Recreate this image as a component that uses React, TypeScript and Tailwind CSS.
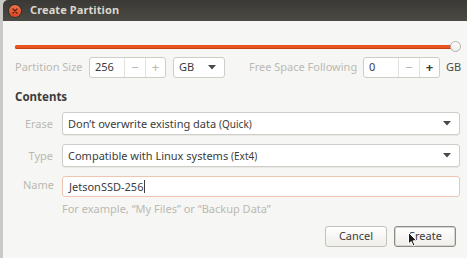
import React from 'react';

const font = { fontFamily: '"Noto Sans", "DejaVu Sans", sans-serif' };

function Arrow() {
  return (
    <svg width="8" height="5" viewBox="0 0 8 5" className="shrink-0">
      <path d="M0 0 L8 0 L4 4.5 Z" fill="#4a4a48" />
    </svg>
  );
}

function SpinBox({ value, minusOn, plusOn }: { value: string; minusOn: boolean; plusOn: boolean }) {
  return (
    <div className="flex h-[21px] w-[77px] shrink-0 rounded-[3px] border border-[#cfcdc8] bg-white text-[11px] text-[#3c3c3c]">
      <div className="flex w-[34px] items-center pl-[5px]">{value}</div>
      <div className={`flex w-[21px] items-center justify-center border-l border-[#e4e2de] text-[13px] ${minusOn ? 'text-[#3c3c3c]' : 'text-[#b9b7b1]'}`}>−</div>
      <div className={`flex flex-1 items-center justify-center border-l border-[#e4e2de] text-[13px] ${plusOn ? 'text-[#3c3c3c] font-bold' : 'text-[#b9b7b1]'}`}>+</div>
    </div>
  );
}

function Combo({ children }: { children: React.ReactNode }) {
  return (
    <div className="flex h-[23px] flex-1 items-center justify-between rounded-[3px] border border-[#cfcdc8] bg-white pl-[5px] pr-[8px] text-[11px] text-[#3c3c3c] shadow-[0_1px_0_rgba(0,0,0,0.05)]">
      <span className="whitespace-nowrap">{children}</span>
      <Arrow />
    </div>
  );
}

export default function App() {
  return (
    <div className="relative h-[258px] w-[467px] overflow-hidden bg-[#c9c9c7] pl-[3px]" style={font}>
      <div className="flex h-full flex-col rounded-tl-[5px] bg-[#f6f6f4]">
        {/* title bar */}
        <div className="flex h-[21px] shrink-0 items-center gap-[9px] rounded-tl-[5px] bg-gradient-to-b from-[#3a3935] to-[#4b4a44] pl-[6px]">
          <div className="flex h-[12px] w-[12px] items-center justify-center rounded-full bg-gradient-to-b from-[#f0724a] to-[#d9431d] shadow-[0_0_0_1px_rgba(0,0,0,0.25)]">
            <svg width="6" height="6" viewBox="0 0 6 6">
              <path d="M1 1 L5 5 M5 1 L1 5" stroke="#5a1e0c" strokeWidth="1.3" strokeLinecap="round" />
            </svg>
          </div>
          <span className="whitespace-nowrap text-[11px] font-bold tracking-[0.1px] text-[#dcd8cf]">Create Partition</span>
        </div>

        <div className="flex flex-1 flex-col pl-[12px] pr-[7px]">
          {/* slider */}
          <div className="relative mr-[4px] mt-[20px] flex h-[10px] items-center">
            <div className="h-[3px] flex-1 rounded-full bg-[#e8551f] shadow-[0_1px_0_#c64113]" />
            <div className="absolute right-[-5px] top-0 h-[11px] w-[11px] rounded-full border border-[#b4b2ac] bg-gradient-to-b from-white to-[#eeede9]" />
          </div>

          {/* size row */}
          <div className="mt-[6px] flex items-center whitespace-nowrap text-[11px]">
            <span className="w-[74px] shrink-0 text-[#bbb9b2]">Partition Size</span>
            <SpinBox value="256" minusOn={false} plusOn={false} />
            <div className="ml-[7px] flex h-[21px] w-[52px] shrink-0 items-center justify-between rounded-[3px] border border-[#cfcdc8] bg-white pl-[5px] pr-[8px] text-[#3c3c3c]">
              <span>GB</span>
              <Arrow />
            </div>
            <span className="ml-[24px] w-[114px] shrink-0 text-[#bbb9b2]">Free Space Following</span>
            <SpinBox value="0" minusOn={false} plusOn={true} />
            <span className="ml-[6px] text-[#4a4a48]">GB</span>
          </div>

          <div className="mt-[10px] text-[11.5px] font-bold text-[#3c3c3c]">Contents</div>

          <div className="mt-[7px] flex flex-col gap-[9px]">
            <div className="flex items-center">
              <span className="w-[38px] shrink-0 text-right text-[11px] text-[#bbb9b2]">Erase</span>
              <div className="ml-[9px] flex flex-1">
                <Combo>
                  Don’t overwrite existing data <span className="text-[10px]">(Quick)</span>
                </Combo>
              </div>
            </div>
            <div className="flex items-center">
              <span className="w-[38px] shrink-0 text-right text-[11px] text-[#bbb9b2]">Type</span>
              <div className="ml-[9px] flex flex-1">
                <Combo>
                  Compatible with Linux systems <span className="text-[10px]">(Ext4)</span>
                </Combo>
              </div>
            </div>
            <div className="flex items-start">
              <span className="mt-[1px] w-[39px] shrink-0 text-right text-[11px] text-[#bbb9b2]">Name</span>
              <div className="ml-[8px] flex flex-1 flex-col">
                <div className="flex h-[21px] items-center rounded-[3px] border border-[#eec5b1] bg-white pl-[6px] text-[11px] text-[#3c3c3c]">
                  JetsonSSD-256<span className="ml-[1px] inline-block h-[13px] w-[1px] bg-[#3c3c3c]" />
                </div>
                <span className="mt-[4px] whitespace-nowrap text-[11px] text-[#bbb9b2]">For example, “My Files” or “Backup Data”</span>
              </div>
            </div>
          </div>

          {/* buttons */}
          <div className="mt-[8px] flex justify-end gap-[7px] pr-[4px]">
            <div className="flex h-[21px] w-[62px] items-center justify-center rounded-[3px] border border-[#c3c1bb] bg-gradient-to-b from-white to-[#efeeea] text-[11px] text-[#3c3c3c]">Cancel</div>
            <div className="flex h-[21px] w-[62px] items-center justify-center rounded-[3px] border border-[#8d8b86] bg-gradient-to-b from-white to-[#efeeea] text-[11px] text-[#3c3c3c] shadow-[inset_0_0_0_1px_#d8d6d1]">Create</div>
          </div>
        </div>
      </div>

      {/* mouse pointer */}
      <svg className="absolute left-[408px] top-[232px]" width="10" height="15" viewBox="0 0 10 15">
        <path d="M0.5 0.5 L0.5 12 L3.2 9.5 L5.2 14 L7 13.2 L5 8.8 L8.8 8.8 Z" fill="#1a1a1a" stroke="#ffffff" strokeWidth="1" />
      </svg>
    </div>
  );
}
